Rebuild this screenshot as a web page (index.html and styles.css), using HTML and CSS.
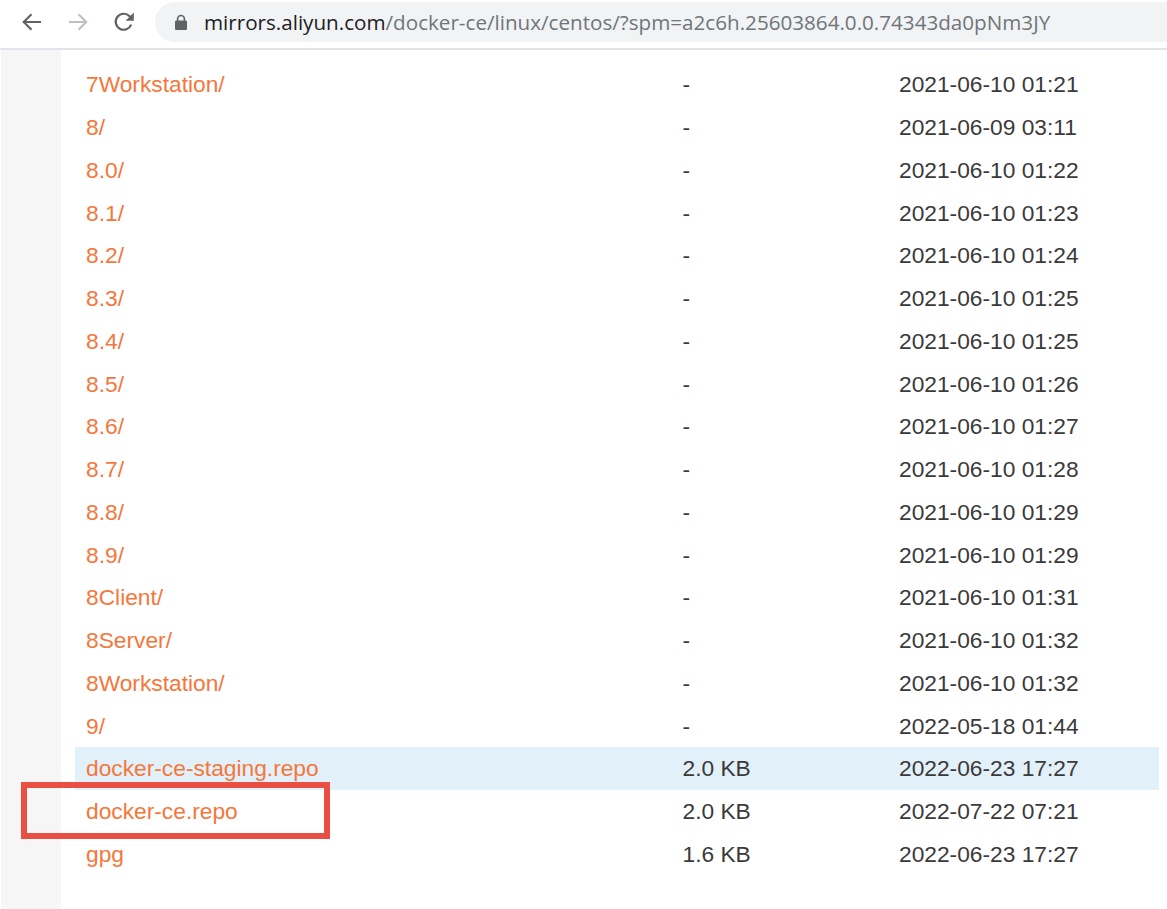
FILE: index.html
```html
<!DOCTYPE html>
<html lang="en">
<head>
<meta charset="utf-8">
<title>Index of /docker-ce/linux/centos/</title>
<link rel="stylesheet" href="styles.css">
</head>
<body>
<header class="toolbar">
  <svg class="nav-icon back" viewBox="0 0 24 24" width="24" height="24"><path d="M21 12H4M11.5 4.2 3.7 12l7.8 7.8" fill="none" stroke="currentColor" stroke-width="2.1"/></svg>
  <svg class="nav-icon forward" viewBox="0 0 24 24" width="24" height="24"><path d="M3 12H20M12.5 4.2 20.3 12l-7.8 7.8" fill="none" stroke="currentColor" stroke-width="2.1"/></svg>
  <svg class="nav-icon reload" viewBox="0 0 24 24" width="24" height="24"><path d="M19.2 14.6A8 8 0 1 1 17.6 6.3L20 8.6" fill="none" stroke="currentColor" stroke-width="2.2"/><path d="M21.8 2.6v8.2h-8.2z" fill="currentColor"/></svg>
  <div class="omnibox">
    <svg class="lock" viewBox="0 0 14 17" width="14" height="17"><path d="M3.6 7V4.9a3.4 3.4 0 0 1 6.8 0V7" fill="none" stroke="currentColor" stroke-width="1.6"/><rect x="1" y="6.5" width="12" height="9.5" rx="1.2" fill="currentColor"/></svg>
    <div class="url"><span class="host">mirrors.aliyun.com</span>/docker-ce/linux/centos/?spm=a2c6h.25603864.0.0.74343da0pNm3JY</div>
  </div>
</header>
<div class="page">
  <aside class="rail"></aside>
  <main class="listing">
    <div class="row"><a class="name">7Workstation/</a><span class="size">-</span><span class="date">2021-06-10 01:21</span></div>
    <div class="row"><a class="name">8/</a><span class="size">-</span><span class="date">2021-06-09 03:11</span></div>
    <div class="row"><a class="name">8.0/</a><span class="size">-</span><span class="date">2021-06-10 01:22</span></div>
    <div class="row"><a class="name">8.1/</a><span class="size">-</span><span class="date">2021-06-10 01:23</span></div>
    <div class="row"><a class="name">8.2/</a><span class="size">-</span><span class="date">2021-06-10 01:24</span></div>
    <div class="row"><a class="name">8.3/</a><span class="size">-</span><span class="date">2021-06-10 01:25</span></div>
    <div class="row"><a class="name">8.4/</a><span class="size">-</span><span class="date">2021-06-10 01:25</span></div>
    <div class="row"><a class="name">8.5/</a><span class="size">-</span><span class="date">2021-06-10 01:26</span></div>
    <div class="row"><a class="name">8.6/</a><span class="size">-</span><span class="date">2021-06-10 01:27</span></div>
    <div class="row"><a class="name">8.7/</a><span class="size">-</span><span class="date">2021-06-10 01:28</span></div>
    <div class="row"><a class="name">8.8/</a><span class="size">-</span><span class="date">2021-06-10 01:29</span></div>
    <div class="row"><a class="name">8.9/</a><span class="size">-</span><span class="date">2021-06-10 01:29</span></div>
    <div class="row"><a class="name">8Client/</a><span class="size">-</span><span class="date">2021-06-10 01:31</span></div>
    <div class="row"><a class="name">8Server/</a><span class="size">-</span><span class="date">2021-06-10 01:32</span></div>
    <div class="row"><a class="name">8Workstation/</a><span class="size">-</span><span class="date">2021-06-10 01:32</span></div>
    <div class="row"><a class="name">9/</a><span class="size">-</span><span class="date">2022-05-18 01:44</span></div>
    <div class="row hover"><a class="name">docker-ce-staging.repo</a><span class="size">2.0 KB</span><span class="date">2022-06-23 17:27</span></div>
    <div class="row"><a class="name">docker-ce.repo</a><span class="size">2.0 KB</span><span class="date">2022-07-22 07:21</span></div>
    <div class="row"><a class="name">gpg</a><span class="size">1.6 KB</span><span class="date">2022-06-23 17:27</span></div>
  </main>
  <div class="callout"></div>
</div>
</body>
</html>
```

FILE: styles.css
```css
html, body {
  margin: 0;
  padding: 0;
  height: 100%;
  overflow: hidden;
  background: #fff;
}

body {
  display: flex;
  flex-direction: column;
  font-family: "Liberation Sans", Arial, sans-serif;
  color: #3a3a3a;
}

.toolbar {
  flex: none;
  display: flex;
  align-items: center;
  box-sizing: border-box;
  height: 50px;
  padding-left: 20px;
  padding-bottom: 4px;
  border-bottom: 2px solid #e3e3ea;
}

.nav-icon {
  flex: none;
}

.back {
  color: #5f6368;
}

.forward {
  color: #bdc1c6;
  margin-left: 22px;
}

.reload {
  color: #5f6368;
  margin-left: 22px;
}

.omnibox {
  flex: 1;
  display: flex;
  align-items: center;
  height: 40px;
  margin-left: 19px;
  padding-left: 19px;
  border-radius: 20px 0 0 20px;
  background: #f1f3f4;
  color: #5f6368;
}

.lock {
  flex: none;
  color: #5f6368;
}

.url {
  margin-left: 16px;
  font-family: "Open Sans", sans-serif;
  font-size: 20.64px;
  white-space: nowrap;
  color: #70757a;
}

.host {
  color: #202124;
}

.page {
  position: relative;
  flex: 1;
  display: flex;
  min-height: 0;
}

.rail {
  flex: none;
  width: 60px;
  margin-left: 1px;
  background: #f6f6f6;
}

.listing {
  flex: 1;
  padding: 13px 8px 0 14px;
  font-size: 22.75px;
}

.row {
  display: grid;
  grid-template-columns: 596.5px 216.5px 1fr;
  align-items: center;
  box-sizing: border-box;
  height: 42.75px;
  padding-top: 1px;
  padding-left: 11px;
}

.row.hover {
  background: #e2f0fa;
}

.name {
  color: #f4773b;
  white-space: nowrap;
}

.size,
.date {
  white-space: nowrap;
}

.callout {
  position: absolute;
  left: 21px;
  top: 732px;
  width: 309px;
  height: 57px;
  box-sizing: border-box;
  border: 6.5px solid #e94f43;
}
```
